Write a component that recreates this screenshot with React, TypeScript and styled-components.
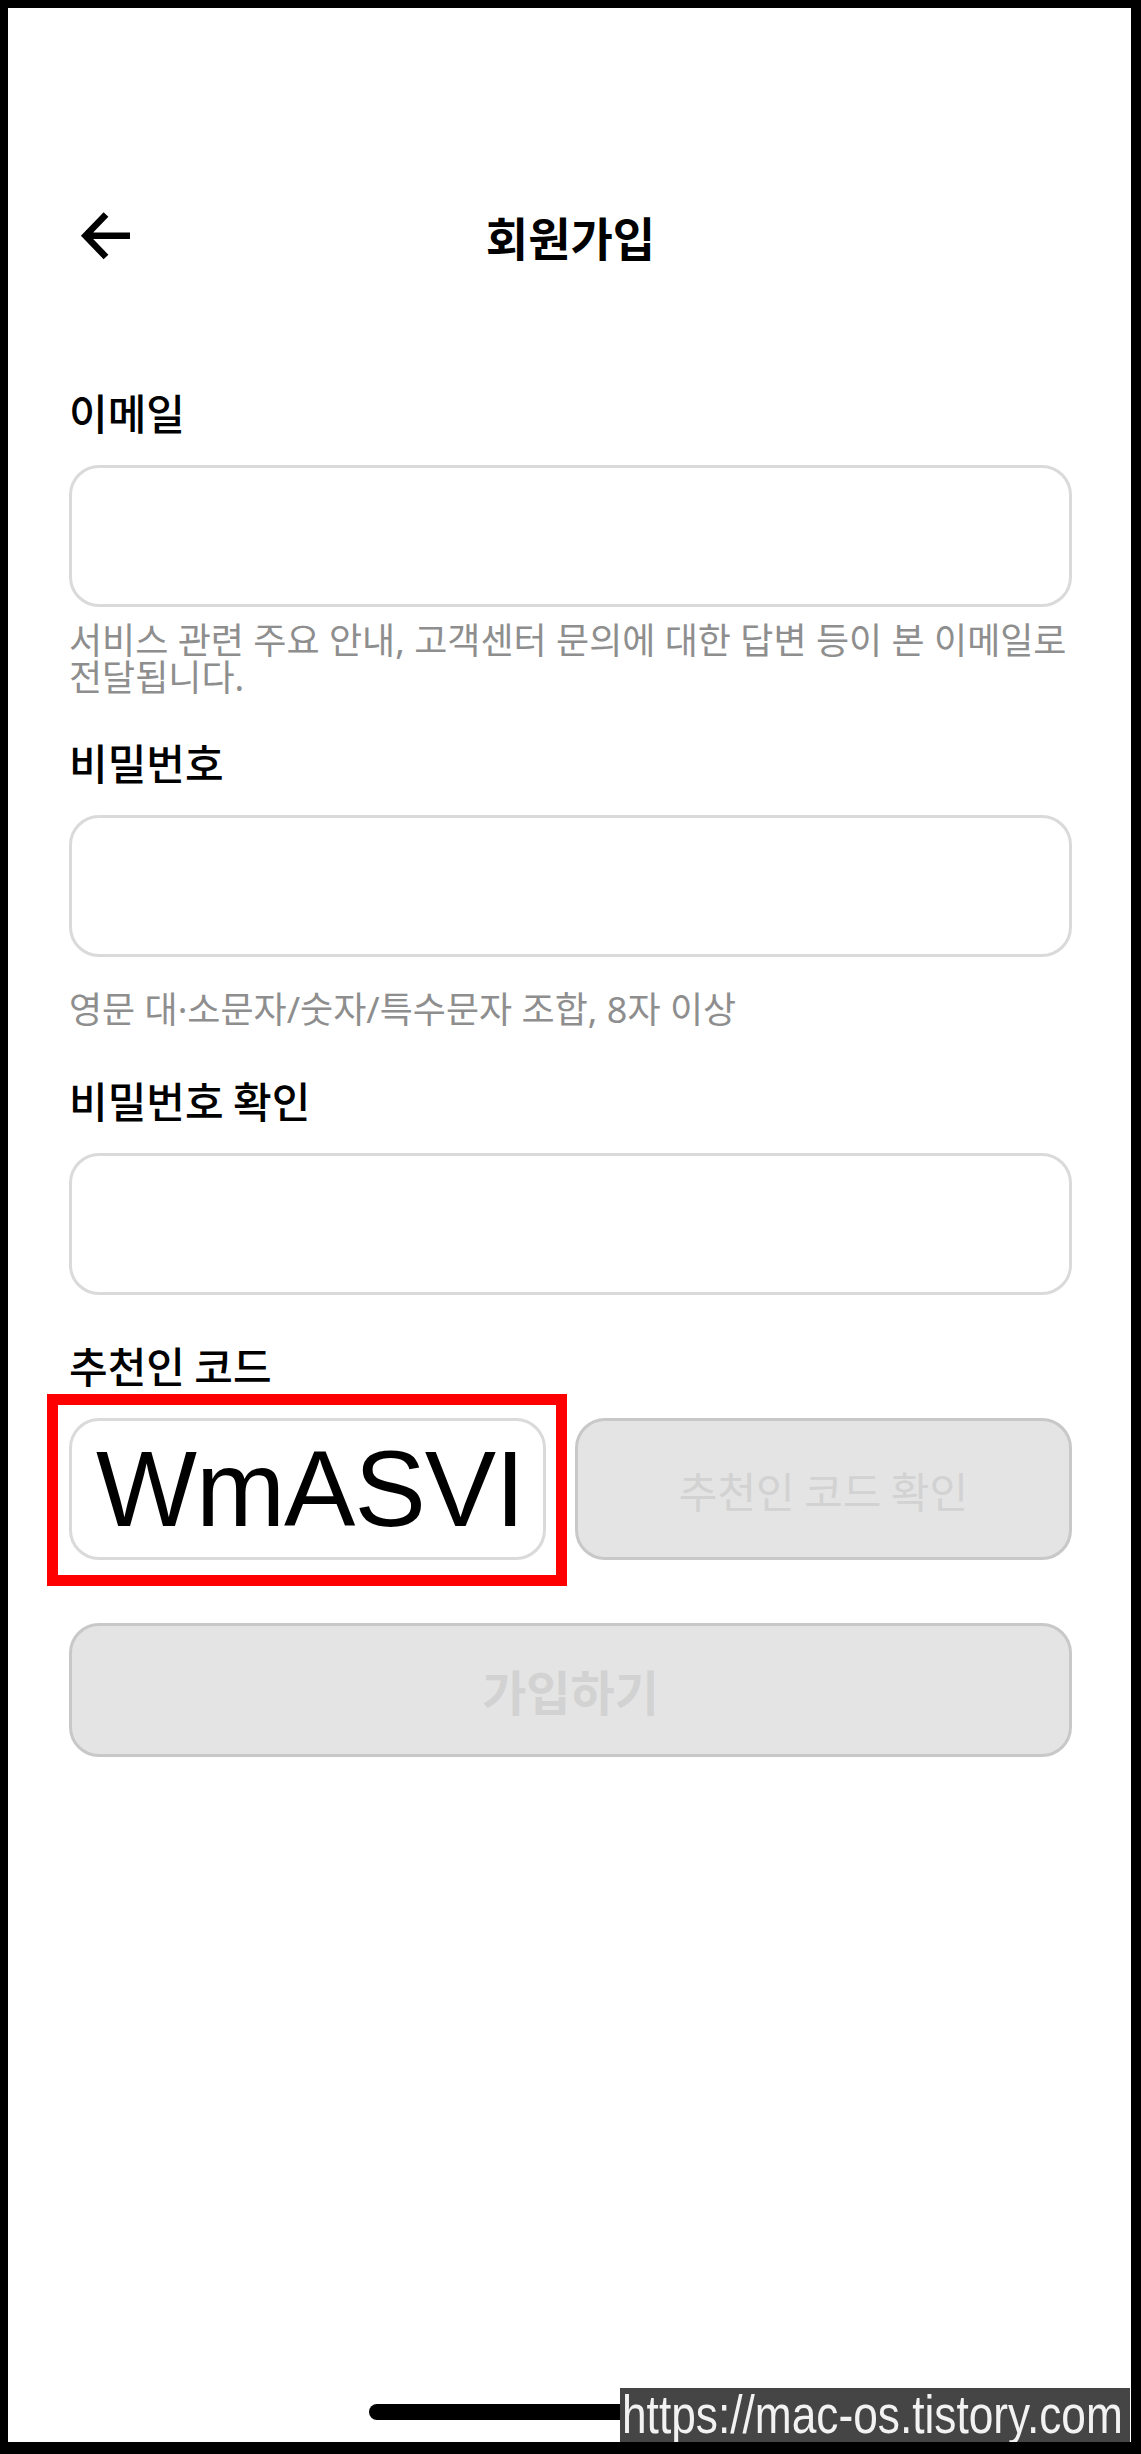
import styled, { createGlobalStyle } from 'styled-components';

const GlobalStyle = createGlobalStyle`
  html, body {
    margin: 0;
    padding: 0;
    background: #fff;
  }

  body {
    font-family: 'Noto Sans CJK KR', 'Noto Sans', sans-serif;
  }
`;

const Frame = styled.div`
  position: relative;
  box-sizing: border-box;
  width: 1141px;
  height: 2454px;
  border-style: solid;
  border-color: #000;
  border-width: 8px 10px 12px 8px;
  background: #fff;
  padding: 200px 59px 0 61px;
  overflow: hidden;
`;

const Header = styled.header`
  display: grid;
  grid-template-columns: 1fr auto 1fr;
  align-items: center;
  height: 56px;
`;

const BackButton = styled.button`
  justify-self: start;
  display: flex;
  padding: 0 0 0 6px;
  border: 0;
  background: none;
  cursor: pointer;
`;

const Title = styled.h1`
  margin: 0;
  font-size: 46px;
  font-weight: 700;
  line-height: 56px;
  color: #000;
`;

const Form = styled.form`
  display: flex;
  flex-direction: column;
`;

const Label = styled.label<{ $top: number }>`
  margin-top: ${(p) => p.$top}px;
  font-size: 42px;
  font-weight: 500;
  line-height: 48px;
  color: #000;
`;

const TextInput = styled.input`
  box-sizing: border-box;
  width: 100%;
  height: 142px;
  margin-top: 29px;
  padding: 0 23px;
  border: 3px solid #dadada;
  border-radius: 30px;
  background: #fff;
  font-family: 'Liberation Sans', Arial, sans-serif;
  font-size: 40px;
  color: #000;
  outline: none;
`;

const Helper = styled.p`
  display: flex;
  align-items: center;
  height: 74px;
  margin: 15px 0 0;
  font-family: 'Noto Sans', 'Noto Sans CJK KR', sans-serif;
  font-size: 36px;
  line-height: 37px;
  color: #8e8e8e;
  word-break: keep-all;
`;

const CodeRow = styled.div`
  display: grid;
  grid-template-columns: 477px 1fr;
  gap: 29px;
  height: 142px;
  margin-top: 29px;
`;

const CodeField = styled.div`
  position: relative;
`;

const CodeInput = styled(TextInput)`
  height: 100%;
  margin: 0;
  padding: 0 0 0 24px;
  font-size: 107px;
  letter-spacing: -1px;
`;

const Highlight = styled.span`
  position: absolute;
  inset: -24px -21px -26px -22px;
  border: 11px solid #ff0000;
  pointer-events: none;
`;

const DisabledButton = styled.button<{ $size: number; $weight: number; $height: number }>`
  box-sizing: border-box;
  width: 100%;
  height: ${(p) => p.$height}px;
  border: 3px solid #c8c8c8;
  border-radius: 30px;
  background: #e4e4e4;
  font-family: 'Noto Sans CJK KR', sans-serif;
  font-size: ${(p) => p.$size}px;
  font-weight: ${(p) => p.$weight};
  color: #d2d2d2;
`;

const SubmitButton = styled(DisabledButton)`
  margin-top: 63px;
`;

const HomeIndicator = styled.div`
  position: absolute;
  left: 50%;
  bottom: 22px;
  width: 402px;
  height: 16px;
  transform: translateX(-50%);
  border-radius: 8px;
  background: #000;
`;

const Watermark = styled.div`
  position: absolute;
  right: 1px;
  bottom: 0;
  width: 510px;
  height: 54px;
  padding-left: 2px;
  box-sizing: border-box;
  background: #454545;
  overflow: hidden;
`;

const WatermarkText = styled.span`
  display: inline-block;
  font-family: 'Liberation Sans', Arial, sans-serif;
  font-size: 53px;
  line-height: 54px;
  color: #f2f2f2;
  white-space: nowrap;
  transform: scaleX(0.835);
  transform-origin: left center;
`;

function BackArrow() {
  return (
    <svg width="56" height="52" viewBox="0 0 56 52" fill="none">
      <path
        d="M31 4.5 L10.5 25.7 L31 47 M10.5 25.7 H55"
        stroke="#000"
        strokeWidth="6.6"
        strokeLinejoin="miter"
      />
    </svg>
  );
}

export default function App() {
  return (
    <>
      <GlobalStyle />
      <Frame>
        <Header>
          <BackButton type="button" aria-label="뒤로가기">
            <BackArrow />
          </BackButton>
          <Title>회원가입</Title>
          <span />
        </Header>

        <Form onSubmit={(e) => e.preventDefault()}>
          <Label $top={124} htmlFor="email">
            이메일
          </Label>
          <TextInput id="email" type="email" />
          <Helper>서비스 관련 주요 안내, 고객센터 문의에 대한 답변 등이 본 이메일로 전달됩니다.</Helper>

          <Label $top={42} htmlFor="password">
            비밀번호
          </Label>
          <TextInput id="password" type="password" />
          <Helper>영문 대·소문자/숫자/특수문자 조합, 8자 이상</Helper>

          <Label $top={30} htmlFor="password-confirm">
            비밀번호 확인
          </Label>
          <TextInput id="password-confirm" type="password" />

          <Label $top={46} htmlFor="referral">
            추천인 코드
          </Label>
          <CodeRow>
            <CodeField>
              <CodeInput id="referral" type="text" defaultValue="WmASVI" />
              <Highlight />
            </CodeField>
            <DisabledButton type="button" disabled $size={42} $weight={400} $height={142}>
              추천인 코드 확인
            </DisabledButton>
          </CodeRow>

          <SubmitButton type="submit" disabled $size={48} $weight={700} $height={134}>
            가입하기
          </SubmitButton>
        </Form>

        <HomeIndicator />
        <Watermark>
          <WatermarkText>https://mac-os.tistory.com</WatermarkText>
        </Watermark>
      </Frame>
    </>
  );
}
